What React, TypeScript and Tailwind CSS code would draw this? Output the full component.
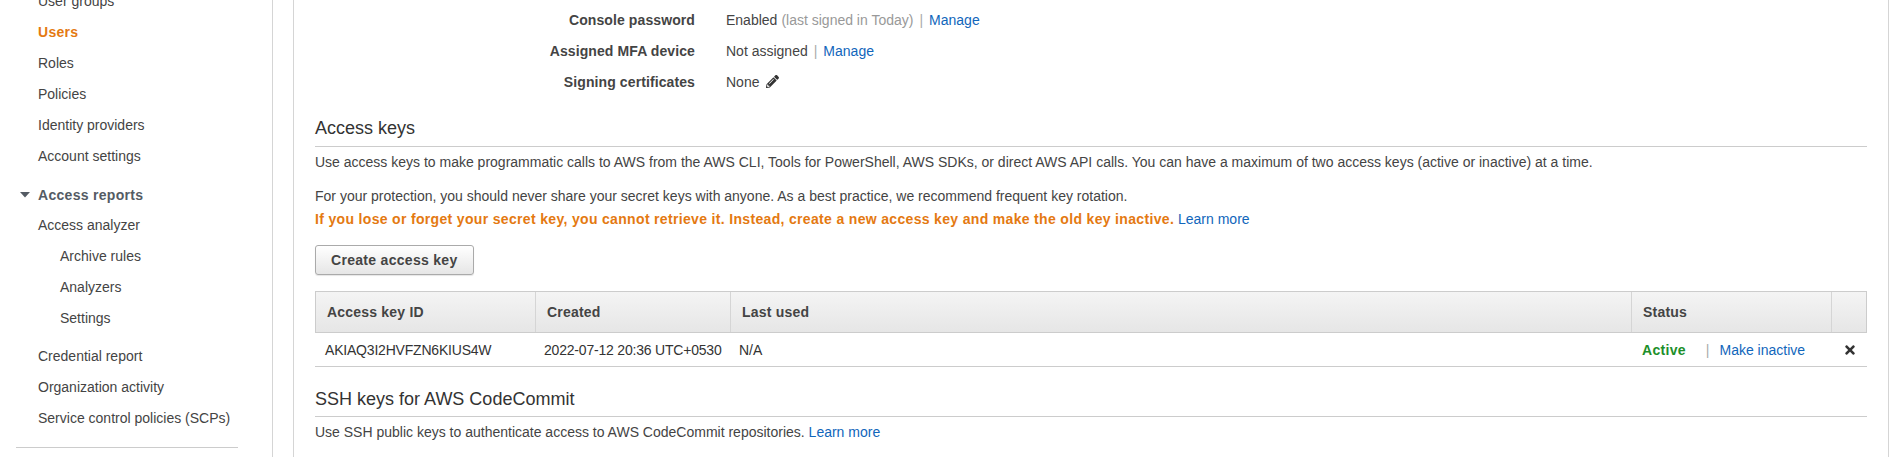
import React from 'react';
import { FaPencilAlt, FaTimes } from 'react-icons/fa';

const navTop = ['User groups', 'Users', 'Roles', 'Policies', 'Identity providers', 'Account settings'];
const analyzerSub = ['Archive rules', 'Analyzers', 'Settings'];
const navBottom = ['Credential report', 'Organization activity', 'Service control policies (SCPs)'];

const Link: React.FC<{ children: React.ReactNode }> = ({ children }) => (
  <a href="#" className="text-[#1166bb] no-underline">
    {children}
  </a>
);

const Pipe = () => <span className="text-[#aaa] px-[6px]">|</span>;

const Sidebar = () => (
  <aside className="w-[273px] shrink-0 border-r border-[#d5d5d5] h-full">
    <div className="-mt-[15px]">
      {navTop.map((item) => (
        <div
          key={item}
          className={`h-[31px] flex items-center pl-[38px] ${
            item === 'Users' ? 'text-[#e47911] font-bold tracking-[0.3px]' : 'text-[#444]'
          }`}
        >
          {item}
        </div>
      ))}
      <div className="mt-[8px] h-[31px] flex items-center pl-[20px] font-bold tracking-[0.3px] text-[#545b64]">
        <svg width="10" height="6" viewBox="0 0 10 6" className="mr-[8px]">
          <path d="M0 0 L10 0 L5 5.5 Z" fill="#545b64" />
        </svg>
        Access reports
      </div>
      <div className="h-[30px] flex items-center pl-[38px]">Access analyzer</div>
      {analyzerSub.map((item) => (
        <div key={item} className="h-[31px] flex items-center pl-[60px]">
          {item}
        </div>
      ))}
      <div className="mt-[7px]">
        {navBottom.map((item) => (
          <div key={item} className="h-[31px] flex items-center pl-[38px]">
            {item}
          </div>
        ))}
      </div>
      <div className="mt-[14px] ml-[16px] w-[222px] border-t border-[#ccc]" />
    </div>
  </aside>
);

const label = 'h-[31px] flex items-center justify-end font-bold tracking-[0.1px] text-[#444]';

const SummaryRows = () => (
  <div className="grid grid-cols-[380px_1fr] gap-x-[31px] pt-[4px]">
    <div className={label}>Console password</div>
    <div className="h-[31px] flex items-center">
      Enabled<span className="text-[#999] ml-[4px]">(last signed in Today)</span>
      <Pipe />
      <Link>Manage</Link>
    </div>
    <div className={label}>Assigned MFA device</div>
    <div className="h-[31px] flex items-center">
      Not assigned
      <Pipe />
      <Link>Manage</Link>
    </div>
    <div className={label}>Signing certificates</div>
    <div className="h-[31px] flex items-center">
      None
      <FaPencilAlt className="ml-[7px] text-[#333]" size={13} />
    </div>
  </div>
);

const headerCell = 'h-full flex items-center px-[11px] font-bold tracking-[0.2px] text-[#444] whitespace-nowrap';
const rowCell = 'h-full flex items-center px-[10px] text-[#333] whitespace-nowrap';

const AccessKeysTable = () => (
  <div className="mt-[16px]">
    <div className="grid grid-cols-[219px_195px_1fr_200px_35px] h-[42px] border border-[#ccc] bg-gradient-to-b from-[#f4f4f4] to-[#e6e6e6]">
      <div className={headerCell}>Access key ID</div>
      <div className={`${headerCell} border-l border-[#d5d5d5]`}>Created</div>
      <div className={`${headerCell} border-l border-[#d5d5d5]`}>Last used</div>
      <div className={`${headerCell} border-l border-[#d5d5d5]`}>Status</div>
      <div className="h-full border-l border-[#d5d5d5]" />
    </div>
    <div className="grid grid-cols-[219px_195px_1fr_200px_35px] h-[34px] border-b border-[#ccc]">
      <div className={`${rowCell} tracking-[-0.2px]`}>AKIAQ3I2HVFZN6KIUS4W</div>
      <div className={`${rowCell} tracking-[-0.2px]`}>2022-07-12 20:36 UTC+0530</div>
      <div className={rowCell}>N/A</div>
      <div className={rowCell}>
        <span className="font-bold tracking-[0.3px] text-[#1d8f2a]">Active</span>
        <span className="text-[#aaa] ml-[20px] mr-[10px]">|</span>
        <Link>Make inactive</Link>
      </div>
      <div className="h-full flex items-center justify-center">
        <FaTimes size={14} className="text-[#333]" />
      </div>
    </div>
  </div>
);

export default function App() {
  return (
    <div className="h-[457px] w-[1900px] overflow-hidden flex bg-white text-[14px] leading-[20px] text-[#444] font-['Liberation_Sans',Arial,sans-serif]">
      <Sidebar />
      <div className="w-[20px] shrink-0" />
      <main className="w-[1596px] shrink-0 h-full border-l border-r border-[#d5d5d5] px-[21px]">
        <SummaryRows />

        <div className="mt-[20px]">
          <h2 className="text-[18px] leading-[22px] text-[#333] font-normal pb-[7px] border-b border-[#ccc]">
            Access keys
          </h2>
          <p className="mt-[5px]">
            Use access keys to make programmatic calls to AWS from the AWS CLI, Tools for PowerShell, AWS SDKs, or
            direct AWS API calls. You can have a maximum of two access keys (active or inactive) at a time.
          </p>
          <p className="mt-[14px]">
            For your protection, you should never share your secret keys with anyone. As a best practice, we
            recommend frequent key rotation.
          </p>
          <p className="mt-[3px]">
            <span className="font-bold tracking-[0.33px] text-[#e47911]">
              If you lose or forget your secret key, you cannot retrieve it. Instead, create a new access key and make
              the old key inactive.
            </span>{' '}
            <Link>Learn more</Link>
          </p>
          <button className="mt-[16px] h-[30px] px-[15px] rounded-[3px] border border-[#aaa] bg-gradient-to-b from-[#ffffff] to-[#e6e6e6] font-bold tracking-[0.3px] text-[#444] shadow-[0_1px_1px_rgba(0,0,0,0.1)]">
            Create access key
          </button>
          <AccessKeysTable />
        </div>

        <div className="mt-[21px]">
          <h2 className="text-[18px] leading-[22px] text-[#333] font-normal pb-[6px] border-b border-[#ccc]">
            SSH keys for AWS CodeCommit
          </h2>
          <p className="mt-[5px]">
            Use SSH public keys to authenticate access to AWS CodeCommit repositories. <Link>Learn more</Link>
          </p>
        </div>
      </main>
    </div>
  );
}
